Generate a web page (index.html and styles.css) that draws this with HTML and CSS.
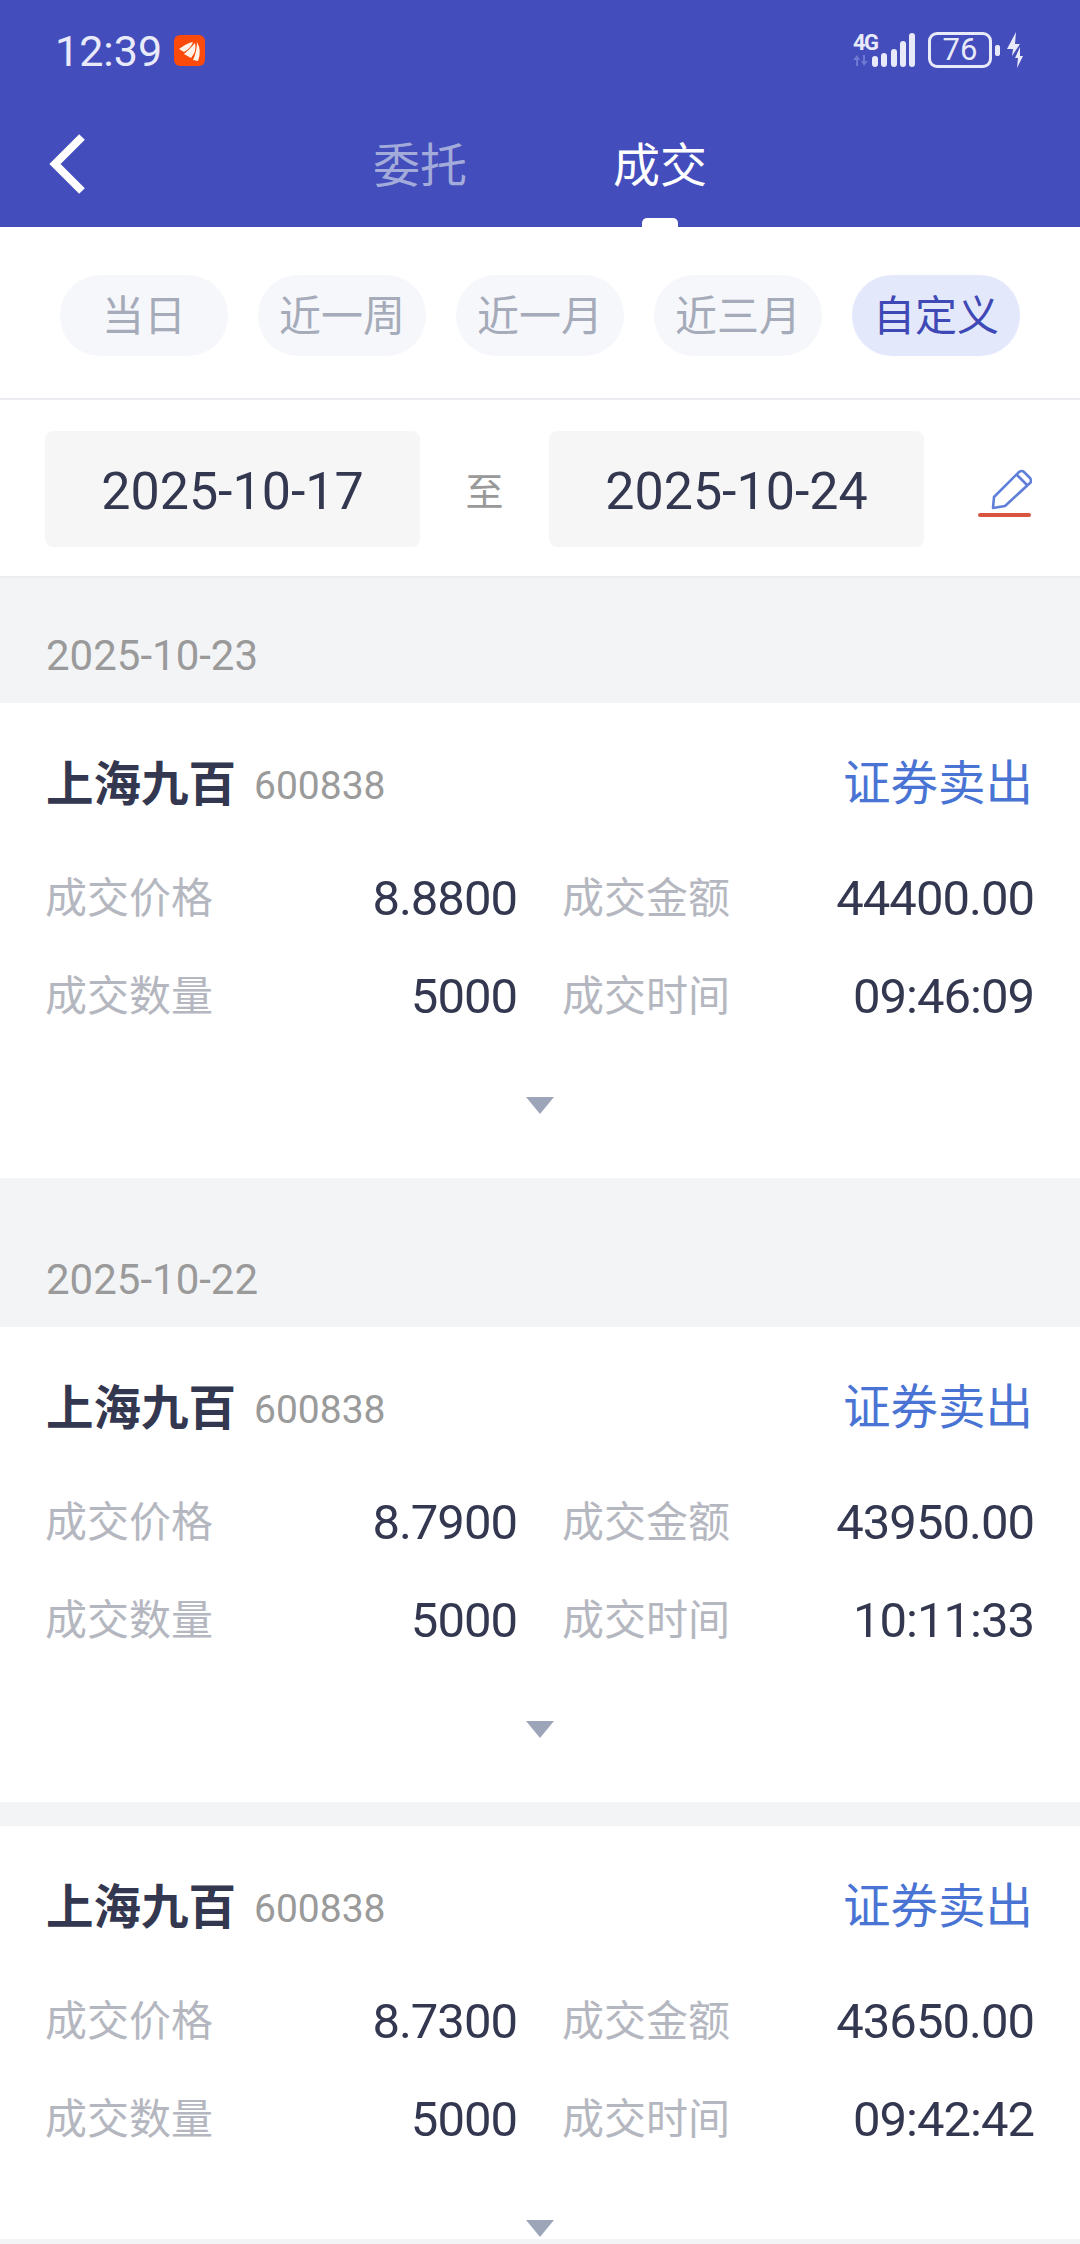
FILE: index.html
```html
<!DOCTYPE html>
<html lang="en">
<head>
    <meta charset="UTF-8">
    <meta name="viewport" content="width=device-width, initial-scale=1.0">
    <title>成交</title>
    <link rel="stylesheet" href="styles.css">
</head>
<body>
    <header class="top">
        <div class="status">
            <div class="status-left">
                <span class="clock">12:39</span>
                <svg class="app-badge" viewBox="0 0 31 31">
                    <rect width="31" height="31" rx="6" fill="#fb4a0a"/>
                    <path d="M5 14 Q13 8 19 7 Q17 13 10 17 Z" fill="#fff4ea"/>
                    <path d="M10 19 Q16 14 21 8 Q23 16 17 23 Z" fill="#fff4ea"/>
                    <path d="M19 25 Q23 16 23 7 Q28 16 24 26 Z" fill="#fff4ea"/>
                </svg>
            </div>
            <div class="status-right">
                <div class="net">
                    <span class="net-label">4G</span>
                    <svg class="net-arrows" viewBox="0 0 15 11">
                        <path d="M4 0 L7 5 H5 V11 H3 V5 H0 Z M11 11 L8 6 H10 V0 H12 V6 H15 Z" fill="#6f78d2"/>
                    </svg>
                </div>
                <svg class="signal" viewBox="0 0 43 34">
                    <rect x="0" y="23" width="6" height="11" rx="3" fill="#e8eafa"/>
                    <rect x="9" y="20" width="6" height="14" rx="3" fill="#e8eafa"/>
                    <rect x="19" y="16" width="6" height="18" rx="3" fill="#e8eafa"/>
                    <rect x="28" y="8" width="6" height="26" rx="3" fill="#e8eafa"/>
                    <rect x="37" y="0" width="6" height="34" rx="3" fill="#e8eafa"/>
                </svg>
                <span class="battery">76</span>
                <span class="battery-nub"></span>
                <svg class="bolt" viewBox="0 0 16 36">
                    <path d="M9 0 L0 17 H6 L5 24 L13 12 H8 Z" fill="#e8eafa"/>
                    <path d="M13 15 L8 26 H11 L10 36 L16 24 H13 Z" fill="#e8eafa"/>
                </svg>
            </div>
        </div>
        <nav class="nav">
            <a class="back">
                <svg viewBox="0 0 38 62" width="38" height="62">
                    <path d="M33 4 L6 31 L33 58" fill="none" stroke="#fff" stroke-width="8"/>
                </svg>
            </a>
            <div class="tabs">
                <span class="tab">委托</span>
                <span class="tab tab-on">成交</span>
            </div>
        </nav>
    </header>

    <div class="ranges">
        <span class="pill">当日</span>
        <span class="pill">近一周</span>
        <span class="pill">近一月</span>
        <span class="pill">近三月</span>
        <span class="pill pill-on">自定义</span>
    </div>

    <div class="dates">
        <div class="date-box">2025-10-17</div>
        <span class="date-to">至</span>
        <div class="date-box">2025-10-24</div>
        <svg class="date-edit" viewBox="0 0 54 50">
            <path d="M15 40 L16 29 L41 4 Q44 2 46 4 L52 10 Q54 13 52 15 L27 38 Z" fill="none" stroke="#5f7fd9" stroke-width="2.6" stroke-linejoin="round"/>
            <path d="M39 7 L49 17" fill="none" stroke="#5f7fd9" stroke-width="2.6"/>
            <rect x="0" y="45" width="53" height="4" rx="2" fill="#d9553f"/>
        </svg>
    </div>

    <div class="day">2025-10-23</div>
    <section class="card">
        <div class="card-head">
            <span class="stock">上海九百</span>
            <span class="code">600838</span>
            <span class="side">证券卖出</span>
        </div>
        <div class="fields">
            <div class="field"><span>成交价格</span><b>8.8800</b></div>
            <div class="field"><span>成交金额</span><b>44400.00</b></div>
            <div class="field"><span>成交数量</span><b>5000</b></div>
            <div class="field"><span>成交时间</span><b>09:46:09</b></div>
        </div>
        <div class="more"></div>
    </section>

    <div class="day">2025-10-22</div>
    <section class="card">
        <div class="card-head">
            <span class="stock">上海九百</span>
            <span class="code">600838</span>
            <span class="side">证券卖出</span>
        </div>
        <div class="fields">
            <div class="field"><span>成交价格</span><b>8.7900</b></div>
            <div class="field"><span>成交金额</span><b>43950.00</b></div>
            <div class="field"><span>成交数量</span><b>5000</b></div>
            <div class="field"><span>成交时间</span><b>10:11:33</b></div>
        </div>
        <div class="more"></div>
    </section>

    <section class="card">
        <div class="card-head">
            <span class="stock">上海九百</span>
            <span class="code">600838</span>
            <span class="side">证券卖出</span>
        </div>
        <div class="fields">
            <div class="field"><span>成交价格</span><b>8.7300</b></div>
            <div class="field"><span>成交金额</span><b>43650.00</b></div>
            <div class="field"><span>成交数量</span><b>5000</b></div>
            <div class="field"><span>成交时间</span><b>09:42:42</b></div>
        </div>
        <div class="more"></div>
    </section>

    <div class="bottom-strip"></div>
</body>
</html>
```

FILE: styles.css
```css
* {
    margin: 0;
    padding: 0;
    box-sizing: border-box;
}

body {
    height: 2244px;
    overflow: hidden;
    background-color: #f3f4f6;
    font-family: 'Roboto', 'Noto Sans CJK SC', sans-serif;
}

/* Blue header */
.top {
    height: 227px;
    background-color: #434dbb;
}

.status {
    height: 100px;
    padding: 0 57px 0 55px;
    display: flex;
    justify-content: space-between;
    align-items: center;
}

.status-left {
    display: flex;
    align-items: center;
    gap: 12px;
}

.clock {
    padding-top: 2px;
    color: #e8eafa;
    font-size: 43px;
    line-height: 50px;
}

.app-badge {
    width: 31px;
    height: 31px;
}

.status-right {
    display: flex;
    align-items: center;
}

.net {
    width: 25px;
    display: flex;
    flex-direction: column;
    gap: 3px;
    margin-right: -6px;
}

.net-label {
    color: #e8eafa;
    font-size: 22px;
    font-weight: 700;
    line-height: 18px;
    letter-spacing: -1.5px;
}

.net-arrows {
    width: 15px;
    height: 11px;
}

.signal {
    width: 43px;
    height: 34px;
    margin-right: 13px;
}

.battery {
    width: 64px;
    height: 36px;
    border: 3px solid #e8eafa;
    border-radius: 9px;
    color: #e8eafa;
    font-size: 31px;
    line-height: 30px;
    text-align: center;
}

.battery-nub {
    width: 5px;
    height: 11px;
    margin: 0 7px 0 3px;
    border-radius: 2px;
    background-color: #e8eafa;
}

.bolt {
    width: 16px;
    height: 36px;
}

.nav {
    height: 127px;
    position: relative;
    display: flex;
    justify-content: center;
}

.back {
    position: absolute;
    left: 49px;
    top: 33px;
    width: 38px;
    height: 62px;
}

.tabs {
    display: flex;
    gap: 146px;
}

.tab {
    position: relative;
    padding-top: 33px;
    color: #a2abd9;
    font-size: 47px;
    line-height: 66px;
}

.tab-on {
    color: #fff;
}

.tab-on::after {
    content: '';
    position: absolute;
    left: 29px;
    top: 118px;
    width: 36px;
    height: 9px;
    border-radius: 5px 5px 0 0;
    background-color: #fff;
}

/* Quick date ranges */
.ranges {
    height: 173px;
    padding: 48px 60px 0;
    display: flex;
    justify-content: space-between;
    align-items: flex-start;
    background-color: #fff;
    border-bottom: 2px solid #ececf0;
}

.pill {
    width: 168px;
    height: 81px;
    border-radius: 40px;
    background-color: #f6f7fb;
    color: #a5abb9;
    font-size: 42px;
    line-height: 84px;
    text-align: center;
}

.pill-on {
    background-color: #e3e8fb;
    color: #3f49b5;
}

/* Custom date inputs */
.dates {
    height: 178px;
    padding: 31px 48px 0 45px;
    display: flex;
    align-items: flex-start;
    background-color: #fff;
    border-bottom: 2px solid #ececf0;
}

.date-box {
    width: 375px;
    height: 116px;
    padding-top: 3px;
    border-radius: 8px;
    background-color: #f6f6f6;
    color: #33374f;
    font-size: 52px;
    line-height: 116px;
    text-align: center;
}

.date-to {
    width: 129px;
    padding-top: 3px;
    color: #999;
    font-size: 38px;
    line-height: 116px;
    text-align: center;
}

.date-edit {
    width: 54px;
    height: 50px;
    margin: 37px 0 0 auto;
}

/* Trade list */
.day {
    height: 125px;
    padding: 53px 46px 0;
    color: #9a9a9a;
    font-size: 42px;
    line-height: 50px;
}

.card {
    padding: 46px 47px 64px 46px;
    margin-bottom: 24px;
    background-color: #fff;
}

.card-head {
    height: 66px;
    display: flex;
    align-items: center;
}

.stock {
    margin-top: -4px;
    color: #33374f;
    font-size: 47.5px;
    font-weight: 700;
}

.code {
    margin: 8px 0 0 18px;
    color: #9a9a9a;
    font-size: 39px;
}

.side {
    margin: -6px 0 0 auto;
    color: #4a74d4;
    font-size: 47.5px;
}

.fields {
    margin-top: 50px;
    display: grid;
    grid-template-columns: 470px 470px;
    column-gap: 47px;
    row-gap: 32px;
}

.field {
    height: 66px;
    display: flex;
    justify-content: space-between;
    align-items: center;
}

.field span {
    padding-bottom: 7px;
    margin-left: -1px;
    color: #b5b7c0;
    font-size: 42px;
}

.field b {
    margin-right: -1px;
    color: #33374f;
    font-size: 49px;
    font-weight: 400;
    letter-spacing: -1px;
}

.more {
    width: 0;
    height: 0;
    margin: 68px auto 0;
    border-left: 14px solid transparent;
    border-right: 14px solid transparent;
    border-top: 17px solid #9da5b8;
}

.bottom-strip {
    position: fixed;
    left: 0;
    bottom: 0;
    width: 100%;
    height: 5px;
    background-color: #f3f4f6;
}
```
